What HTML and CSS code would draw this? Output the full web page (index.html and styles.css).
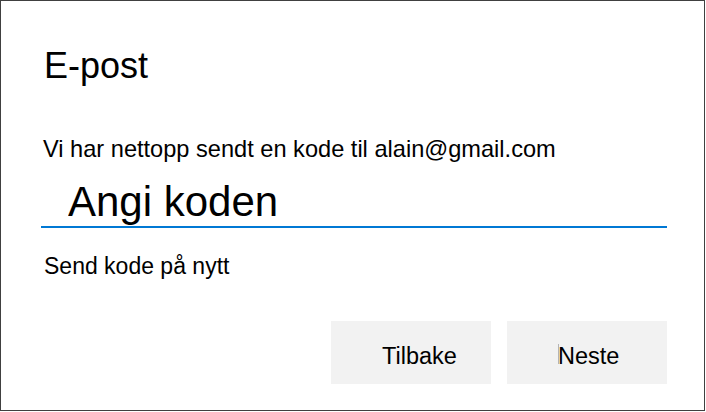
FILE: index.html
```html
<!DOCTYPE html>
<html lang="nb">
<head>
<meta charset="utf-8">
<title>E-post</title>
<link rel="stylesheet" href="styles.css">
</head>
<body>
<div class="dialog">
  <h1 class="title">E-post</h1>
  <p class="info">Vi har nettopp sendt en kode til alain@gmail.com</p>
  <input class="code-field" type="text" placeholder="Angi koden" aria-label="Angi koden">
  <p class="resend">Send kode på nytt</p>
  <div class="actions">
    <button class="btn" type="button">Tilbake</button>
    <button class="btn" type="button"><span class="caret"></span>Neste</button>
  </div>
</div>
</body>
</html>
```
FILE: styles.css
```css
html, body {
  margin: 0;
  padding: 0;
  background: #ffffff;
}

body {
  font-family: "Liberation Sans", Arial, sans-serif;
  color: #000000;
}

.dialog {
  width: 705px;
  height: 411px;
  box-sizing: border-box;
  border: 1px solid #404040;
  padding: 43px 0 0 40px;
  background: #ffffff;
}

.title {
  margin: 0;
  padding-left: 3px;
  font-size: 36px;
  line-height: 44px;
  font-weight: normal;
}

.info {
  margin: 46px 0 0 0;
  padding-left: 2px;
  font-size: 23.6px;
  line-height: 30px;
}

.code-field {
  display: block;
  margin: 12px 0 0 0;
  width: 626px;
  height: 52px;
  box-sizing: border-box;
  border: none;
  border-bottom: 2px solid #0078d4;
  padding: 2px 0 0 27px;
  font-family: "Liberation Sans", Arial, sans-serif;
  font-size: 42px;
  color: #000000;
  background: transparent;
  outline: none;
}

.code-field::placeholder {
  color: #000000;
  opacity: 1;
}

.resend {
  margin: 23px 0 0 0;
  padding-left: 3px;
  font-size: 23px;
  line-height: 30px;
}

.actions {
  display: flex;
  justify-content: flex-end;
  gap: 16px;
  width: 626px;
  margin-top: 40px;
}

.btn {
  width: 160px;
  height: 63px;
  box-sizing: border-box;
  padding: 8px 0 0 51px;
  border: none;
  background: #f2f2f2;
  font-family: "Liberation Sans", Arial, sans-serif;
  font-size: 23.5px;
  line-height: 55px;
  color: #000000;
  text-align: left;
  cursor: pointer;
}

.caret {
  display: inline-block;
  width: 1px;
  height: 20px;
  margin-right: -1px;
  background: #b4b4b4;
}
```
